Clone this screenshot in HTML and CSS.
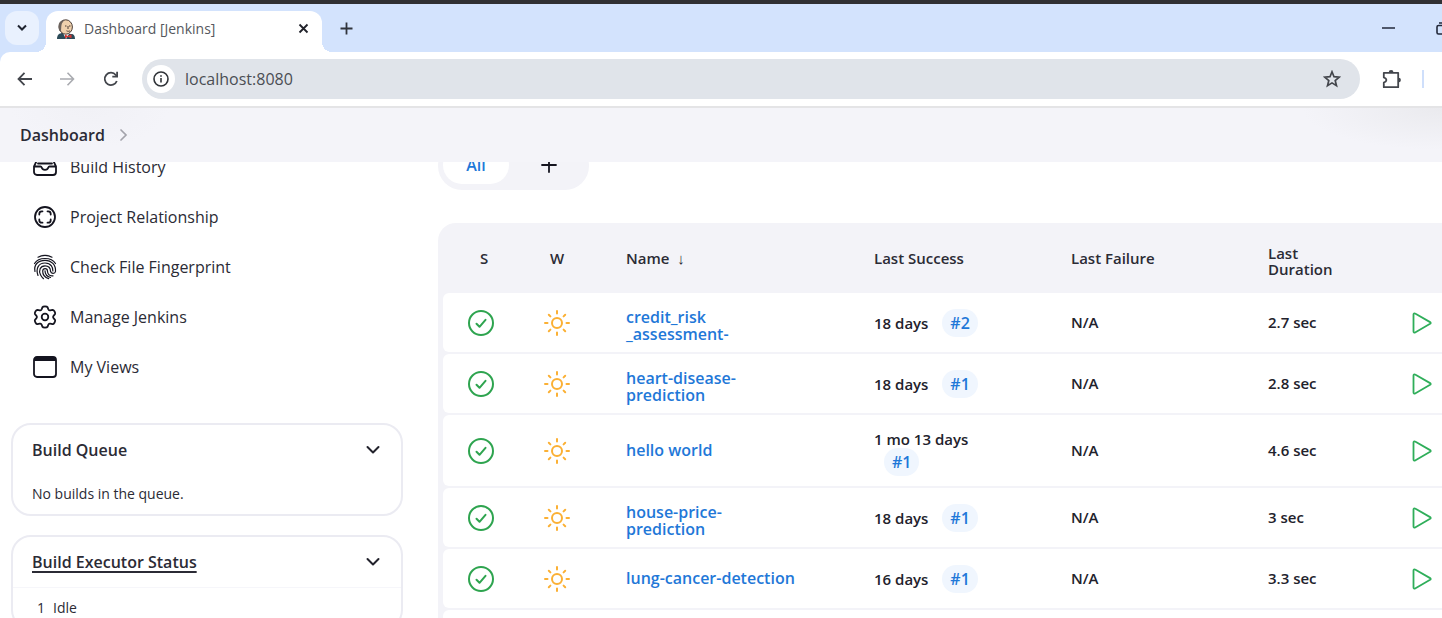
FILE: index.html
```html
<!DOCTYPE html>
<html lang="en">
<head>
<meta charset="utf-8">
<title>Dashboard [Jenkins]</title>
<link rel="stylesheet" href="styles.css">
</head>
<body>
<svg class="sprite" aria-hidden="true">
  <symbol id="ok" viewBox="0 0 26 26"><circle cx="13" cy="13" r="12" fill="none" stroke="#2ea44f" stroke-width="2"/><path d="M8.500 13.800l3 3 6-7" fill="none" stroke="#2ea44f" stroke-width="2" stroke-linecap="round" stroke-linejoin="round"/></symbol>
  <symbol id="sun" viewBox="0 0 26 26"><g fill="none" stroke="#fbb034" stroke-width="2" stroke-linecap="round"><circle cx="13" cy="13" r="5"/><path d="M13 1v2.500M13 22.500V25M1 13h2.500M22.500 13H25M4.800 4.800l1.600 1.600M19.600 19.600l1.600 1.600M4.800 21.200l1.600-1.600M19.600 6.400l1.600-1.600"/></g></symbol>
  <symbol id="play" viewBox="0 0 20 22"><path d="M1.500 2.500v17c0 1 .8 1.400 1.600 1l15-8.700c.8-.5.8-1.200 0-1.700l-15-8.600c-.8-.5-1.600 0-1.600 1z" fill="none" stroke="#2fae5a" stroke-width="1.800" stroke-linejoin="round"/></symbol>
  <symbol id="chev" viewBox="0 0 14 10"><path d="M1.500 2l5.500 5.500L12.500 2" fill="none" stroke="#22222c" stroke-width="2" stroke-linecap="round" stroke-linejoin="round"/></symbol>
</svg>

<header class="browser">
  <div class="tabstrip">
    <button class="tab-search" aria-label="Search tabs"><svg width="12" height="8" viewBox="0 0 12 8"><path d="M2 1.500l4 4 4-4" fill="none" stroke="#1f2430" stroke-width="2"/></svg></button>
    <div class="tab">
      <svg width="19" height="20" viewBox="0 0 19 20"><path d="M1 20c0-4 2-6 6-6l8 1c3 0 4 2 4 5z" fill="#2b4a58"/><path d="M7 14l3 6 3-5z" fill="#fff"/><ellipse cx="9.800" cy="8" rx="6.600" ry="7.200" fill="#efd0ac" stroke="#4a3c35" stroke-width="1"/><path d="M3.500 12C1 7 3 1 8.500.8L7 3C5 5 5.500 7 5 12z" fill="#6b625c"/><path d="M9 7h1.500M13 7h1.500M10.500 11.800c1.500.8 2.500.6 3.500 0M12 7v3" stroke="#4a3c35" fill="none"/><path d="M9 15.500l3 1.500 3.500-1.800v4L12 17.800l-3 1.700z" fill="#d33833"/></svg>
      <span class="tab-title">Dashboard [Jenkins]</span>
      <button class="plain" aria-label="Close tab"><svg width="11" height="11" viewBox="0 0 11 11"><path d="M1.500 1.500l8 8M9.500 1.500l-8 8" stroke="#20222a" stroke-width="1.800"/></svg></button>
    </div>
    <button class="plain new-tab" aria-label="New tab"><svg width="13" height="13" viewBox="0 0 13 13"><path d="M6.500.5v12M.5 6.500h12" stroke="#30343c" stroke-width="1.800"/></svg></button>
    <div class="window-buttons">
      <button class="plain" aria-label="Minimize"><svg width="13" height="2"><path d="M0 1h13" stroke="#22283a" stroke-width="1.500"/></svg></button>
      <button class="plain" aria-label="Restore"><svg width="6" height="13" viewBox="0 0 6 13"><rect x="1" y="3.500" width="8.500" height="8.500" rx="1.500" fill="none" stroke="#22283a" stroke-width="1.600"/><path d="M3 1h9" stroke="#22283a" stroke-width="1.500"/></svg></button>
    </div>
  </div>
  <div class="toolbar">
    <button class="plain" aria-label="Back"><svg width="15" height="14" viewBox="0 0 15 14"><path d="M7.500.8L1.500 7l6 6.200M1.500 7H15" fill="none" stroke="#43464c" stroke-width="1.800"/></svg></button>
    <button class="plain" aria-label="Forward"><svg width="15" height="14" viewBox="0 0 15 14"><path d="M7.500.8l6 6.200-6 6.200M13.500 7H0" fill="none" stroke="#a9abb0" stroke-width="1.600"/></svg></button>
    <button class="plain" aria-label="Reload"><svg width="16" height="16" viewBox="0 0 16 16"><path d="M13.800 10A6.200 6.200 0 1 1 12.800 4L14 5.500" fill="none" stroke="#43464c" stroke-width="1.800"/><path d="M15 .8V6.500H9.300V4.700h3.900V.8z" fill="#43464c"/></svg></button>
    <div class="address">
      <button class="site-info" aria-label="Site information"><svg width="16" height="16" viewBox="0 0 16 16"><circle cx="8" cy="8" r="7" fill="none" stroke="#303338" stroke-width="1.600"/><path d="M8 7v4.500M8 4.200v1.600" stroke="#303338" stroke-width="1.600"/></svg></button>
      <input type="text" value="localhost:8080" aria-label="Address">
      <button class="plain" aria-label="Bookmark"><svg width="18" height="18" viewBox="0 0 18 18"><path d="M9 1.800l2 4.900 5.300.4-4.100 3.400 1.300 5.200L9 12.900l-4.500 2.800 1.300-5.200L1.700 7.100 7 6.700z" fill="none" stroke="#43464c" stroke-width="1.700"/></svg></button>
    </div>
    <div class="extensions">
      <button class="plain" aria-label="Extensions"><svg width="20" height="20" viewBox="0 0 20 20"><path d="M1.800 3.800h14.400v14.400H1.800v-4.500c3.500-1.500 3.500-4 0-5.300z" fill="none" stroke="#43464c" stroke-width="1.800" stroke-linejoin="round"/><path d="M6.700 3.500a2.400 2.400 0 0 1 4.800 0zM16.500 8.700a2.400 2.400 0 0 1 0 4.800z" fill="#43464c"/></svg></button>
      <span class="divider"></span>
    </div>
  </div>
</header>

<nav class="breadcrumbs" aria-label="Breadcrumb">
  <a href="#">Dashboard</a>
  <svg width="9" height="14" viewBox="0 0 9 14"><path d="M2 2l5 5-5 5" fill="none" stroke="#a3a3ab" stroke-width="1.700" stroke-linecap="round"/></svg>
</nav>

<div class="viewport">
  <div class="page">
    <aside class="sidebar">
      <nav class="tasks" aria-label="Tasks">
        <a href="#"><svg viewBox="0 0 24 24"><path d="M1 11.500L4.500 4h15L23 11.500V17a3 3 0 0 1-3 3H4a3 3 0 0 1-3-3v-5.500h6.500c.7 0 1 .4 1.200 1 .4 1.400 1.600 2.300 3.300 2.300s2.900-.9 3.300-2.300c.2-.6.500-1 1.200-1H23M5 8.500h14" class="ink"/></svg>Build History</a>
        <a href="#"><svg viewBox="0 0 24 24"><circle cx="12" cy="12" r="10" class="ink"/><path d="M9.500 6.300H8.800C7 6.300 6.300 7.200 6.300 8.800v.7M14.500 6.300h.7c1.800 0 2.500.9 2.500 2.500v.7M9.500 17.700h-.7c-1.800 0-2.500-.9-2.500-2.500v-.7M14.500 17.700h.7c1.800 0 2.500-.9 2.500-2.500v-.7" class="ink"/></svg>Project Relationship</a>
        <a href="#"><svg viewBox="0 0 24 24"><g class="ink fine"><path d="M5 2.200C9-.2 15-.2 19 2.200M1.500 8.500C5.500 1.800 18.500 1.800 22.500 8.500M2 16.500C.5 9.500 5.500 5.300 12 5.300S23 10 22.500 16.500C22 19 18 19 17.500 16.200 17.500 13 15.500 10.800 12 10.800c-5 0-6.500 5-4.500 9 .8 1.700 1.800 2.800 3 3.900M5 20.500C2.500 13.500 5.500 8 12 8s8 5 7.900 8M20 20.800c-4 .6-5.400-2-5.500-4.600 0-3.500-4.600-3.500-4.800-.2-.1 4 2.600 6.700 6 7.700M12 15.800c.1 3.800 2.400 6 5.500 6.700"/></g></svg>Check File Fingerprint</a>
        <a href="#"><svg viewBox="0 0 24 24"><circle cx="12" cy="12" r="3.300" class="ink"/><path d="M9.400 2.200c.7-1.200 4.500-1.200 5.200 0l.7 2.100c.3.800 1 1.200 1.900 1l2.300-.5c1.400-.1 3.300 3.200 2.500 4.400l-1.500 1.700c-.6.700-.6 1.500 0 2.200l1.500 1.700c.8 1.200-1.100 4.500-2.500 4.400l-2.300-.5c-.9-.2-1.600.2-1.900 1l-.7 2.100c-.7 1.200-4.500 1.200-5.200 0l-.7-2.100c-.3-.8-1-1.200-1.900-1l-2.300.5c-1.400.1-3.300-3.200-2.500-4.400l1.500-1.700c.6-.7.600-1.500 0-2.200L2 9.200C1.200 8 3.100 4.700 4.500 4.800l2.300.5c.9.200 1.600-.2 1.900-1z" class="ink"/></svg>Manage Jenkins</a>
        <a href="#"><svg viewBox="0 0 24 24"><rect x="1" y="2" width="22" height="20" rx="3" class="ink"/><path d="M1 6V5a3 3 0 0 1 3-3h16a3 3 0 0 1 3 3v1z" fill="#14141f"/></svg>My Views</a>
      </nav>
      <section class="card">
        <div class="card-head"><h2>Build Queue</h2><button class="plain" aria-label="Collapse build queue"><svg width="14" height="10"><use href="#chev"/></svg></button></div>
        <p class="empty">No builds in the queue.</p>
      </section>
      <section class="card">
        <div class="card-head"><h2><a href="#">Build Executor Status</a></h2><button class="plain" aria-label="Collapse executor status"><svg width="14" height="10"><use href="#chev"/></svg></button></div>
        <div class="executor"><span>1</span><span>Idle</span></div>
      </section>
    </aside>

    <main class="main">
      <div class="views">
        <a class="view active" href="#">All</a>
        <a class="view" href="#" aria-label="New view"><svg width="16" height="16" viewBox="0 0 16 16"><path d="M8 1v14M1 8h14" stroke="#14141f" stroke-width="1.800" stroke-linecap="round"/></svg></a>
      </div>
      <table class="jobs">
        <colgroup><col class="c-status"><col class="c-weather"><col><col class="c-time"><col class="c-time"><col class="c-duration"><col class="c-run"></colgroup>
        <thead>
          <tr><th class="s">S</th><th class="w">W</th><th>Name <span class="sort">↓</span></th><th>Last Success</th><th>Last Failure</th><th class="two-line">Last<br>Duration</th><th></th></tr>
        </thead>
        <tbody>
          <tr><td><svg class="state" role="img" aria-label="Success"><use href="#ok"/></svg></td><td><svg class="state" role="img" aria-label="Sunny"><use href="#sun"/></svg></td><td class="two-line"><a href="#">credit_risk<br>_assessment-</a></td><td>18 days <a class="build" href="#">#2</a></td><td>N/A</td><td>2.7 sec</td><td><button class="plain" aria-label="Build credit_risk_assessment-"><svg width="20" height="22"><use href="#play"/></svg></button></td></tr>
          <tr><td><svg class="state" role="img" aria-label="Success"><use href="#ok"/></svg></td><td><svg class="state" role="img" aria-label="Sunny"><use href="#sun"/></svg></td><td class="two-line"><a href="#">heart-disease-<br>prediction</a></td><td>18 days <a class="build" href="#">#1</a></td><td>N/A</td><td>2.8 sec</td><td><button class="plain" aria-label="Build heart-disease-prediction"><svg width="20" height="22"><use href="#play"/></svg></button></td></tr>
          <tr class="tall"><td><svg class="state" role="img" aria-label="Success"><use href="#ok"/></svg></td><td><svg class="state" role="img" aria-label="Sunny"><use href="#sun"/></svg></td><td><a href="#">hello world</a></td><td class="two-line">1 mo 13 days<br><a class="build" href="#">#1</a></td><td>N/A</td><td>4.6 sec</td><td><button class="plain" aria-label="Build hello world"><svg width="20" height="22"><use href="#play"/></svg></button></td></tr>
          <tr><td><svg class="state" role="img" aria-label="Success"><use href="#ok"/></svg></td><td><svg class="state" role="img" aria-label="Sunny"><use href="#sun"/></svg></td><td class="two-line"><a href="#">house-price-<br>prediction</a></td><td>18 days <a class="build" href="#">#1</a></td><td>N/A</td><td>3 sec</td><td><button class="plain" aria-label="Build house-price-prediction"><svg width="20" height="22"><use href="#play"/></svg></button></td></tr>
          <tr><td><svg class="state" role="img" aria-label="Success"><use href="#ok"/></svg></td><td><svg class="state" role="img" aria-label="Sunny"><use href="#sun"/></svg></td><td><a href="#">lung-cancer-detection</a></td><td>16 days <a class="build" href="#">#1</a></td><td>N/A</td><td>3.3 sec</td><td><button class="plain" aria-label="Build lung-cancer-detection"><svg width="20" height="22"><use href="#play"/></svg></button></td></tr>
          <tr><td></td><td></td><td></td><td></td><td></td><td></td><td></td></tr>
        </tbody>
      </table>
    </main>
  </div>
</div>
</body>
</html>
```

FILE: styles.css
```css
* { box-sizing: border-box; }

body {
  margin: 0;
  height: 100vh;
  display: flex;
  flex-direction: column;
  overflow: hidden;
  background: #fff;
  color: #2b2b35;
  font-family: "Open Sans", "Noto Sans", sans-serif;
  font-size: 16px;
}

a { color: inherit; text-decoration: none; }
svg { display: block; flex: none; }
button { font: inherit; cursor: pointer; }
.sprite { width: 0; height: 0; position: absolute; }
.plain { border: 0; padding: 0; background: none; }

/* Browser frame */
.browser {
  flex: none;
  border-top: 4px solid #303033;
  border-bottom: 2px solid #e4e4e6;
  background: #d3e3fd;
}

.tabstrip {
  display: flex;
  align-items: center;
  height: 48px;
  padding-left: 5px;
}

.tab-search {
  display: grid;
  place-items: center;
  width: 34px;
  height: 34px;
  border: 0;
  border-radius: 12px;
  background: #e9f1fe;
}

.tab {
  position: relative;
  align-self: flex-end;
  display: flex;
  align-items: center;
  gap: 9px;
  width: 276px;
  height: 41px;
  margin-left: 7px;
  padding: 0 13px 6px 10px;
  border-radius: 12px 12px 0 0;
  background: #fff;
}

.tab::before,
.tab::after {
  content: "";
  position: absolute;
  bottom: 0;
  width: 10px;
  height: 10px;
}
.tab::before { left: -10px; background: radial-gradient(circle at 0 0, transparent 10px, #fff 10px); }
.tab::after { right: -10px; background: radial-gradient(circle at 100% 0, transparent 10px, #fff 10px); }

.tab-title { flex: 1; font-size: 14px; color: #55575d; }
.new-tab { margin-left: 18px; }
.window-buttons { display: flex; align-items: center; gap: 41px; margin-left: auto; }

.toolbar {
  display: flex;
  align-items: center;
  gap: 28px;
  height: 54px;
  padding-left: 17px;
  border-radius: 10px 0 0 0;
  background: #fff;
}

.address {
  flex: 1;
  display: flex;
  align-items: center;
  gap: 10px;
  height: 40px;
  margin-left: -5px;
  padding: 0 19px 0 5px;
  border-radius: 20px;
  background: #e0e4ea;
}

.site-info {
  display: grid;
  place-items: center;
  width: 28px;
  height: 28px;
  padding: 0;
  border: 0;
  border-radius: 50%;
  background: #fff;
}

.address input {
  flex: 1;
  min-width: 0;
  padding: 0;
  border: 0;
  outline: 0;
  background: none;
  font: inherit;
  color: #4b4e54;
}

.extensions { display: flex; align-items: center; gap: 20px; margin-left: -6px; padding-right: 18px; }
.divider { width: 2px; height: 18px; background: #cfdffb; }

/* Breadcrumb bar */
.breadcrumbs {
  flex: none;
  display: flex;
  align-items: center;
  gap: 14px;
  height: 54px;
  padding-left: 20px;
  background:
    radial-gradient(ellipse 140px 42px at 100% 0, #eaeaee, transparent),
    radial-gradient(ellipse 80px 40px at 90px 0, #f1f1f6, transparent),
    #f4f4f9;
  font-weight: 600;
}

/* Scrolled page */
.viewport { flex: 1; min-height: 0; overflow: hidden; }
.page { display: flex; gap: 35px; margin-top: -20px; padding-left: 11px; }
.sidebar { flex: none; width: 392px; }
.tasks { margin-bottom: 31px; }

.tasks a {
  display: flex;
  align-items: center;
  gap: 13px;
  height: 50px;
  padding-left: 22px;
}
.tasks svg { width: 24px; height: 24px; overflow: visible; }
.ink { fill: none; stroke: #14141f; stroke-width: 1.8; stroke-linecap: round; stroke-linejoin: round; }
.fine { stroke-width: 1.2; }

.card {
  margin-bottom: 19px;
  border: 2px solid #ebebf2;
  border-radius: 20px;
}

.card-head {
  display: flex;
  align-items: center;
  justify-content: space-between;
  height: 50px;
  padding: 0 21px 0 19px;
}

h2 { margin: 0; font-size: 16px; font-weight: 600; }
h2 a { text-decoration: underline; text-decoration-thickness: 2px; text-underline-offset: 3px; }
.empty { margin: 0; padding: 10px 19px 11px; font-size: 14px; line-height: 18px; }

.executor {
  display: flex;
  gap: 8px;
  padding: 11px 24px;
  border-top: 1px solid #f6f6fa;
  font-size: 14px;
  line-height: 18px;
}

/* Job list */
.main { flex: 1; min-width: 0; }

.views {
  display: flex;
  width: fit-content;
  height: 48px;
  margin-bottom: 33px;
  padding: 4px 5px 6px;
  gap: 4px;
  border-radius: 24px;
  background: #f3f3f8;
}

.view {
  display: flex;
  align-items: center;
  justify-content: center;
  width: 66px;
  border-radius: 20px;
}
.view + .view { width: 71px; }
.active { background: #fff; color: #1f78d8; font-weight: 600; }

.jobs {
  width: 100%;
  table-layout: fixed;
  border-collapse: separate;
  border-spacing: 0 2px;
  padding-left: 5px;
  border-radius: 18px 0 0 0;
  background: #f3f3f8;
  line-height: 17px;
}

.c-status { width: 76px; }
.c-weather { width: 91px; }
.c-time { width: 197px; }
.c-duration { width: 144px; }
.c-run { width: 46px; }

.jobs th {
  height: 66px;
  padding: 0 16px;
  text-align: left;
  font-size: 15px;
  font-weight: 600;
  line-height: 16px;
}
.jobs .s { padding-left: 37px; }
.jobs .w { padding-left: 31px; }
.sort { margin-left: 4px; font-weight: 400; }

.jobs td {
  height: 59px;
  padding: 0 16px;
  background: #fff;
  color: #22222c;
  font-size: 15px;
  font-weight: 600;
}
.jobs .tall td { height: 71px; }
.jobs .two-line { padding-top: 6px; }
.jobs td:nth-child(-n+2) { padding: 0 0 0 25px; }
.jobs td:first-child { border-radius: 6px 0 0 6px; }
.jobs td:last-child { padding: 0 0 0 16px; }
.jobs td button { display: block; }
.jobs td > a { color: #1f78d8; font-size: 16px; }
.state { width: 26px; height: 26px; }

.jobs td > .build {
  display: inline-block;
  margin-left: 10px;
  padding: 0 8px;
  border-radius: 14px;
  background: #f0f6fe;
  line-height: 28px;
}
```
